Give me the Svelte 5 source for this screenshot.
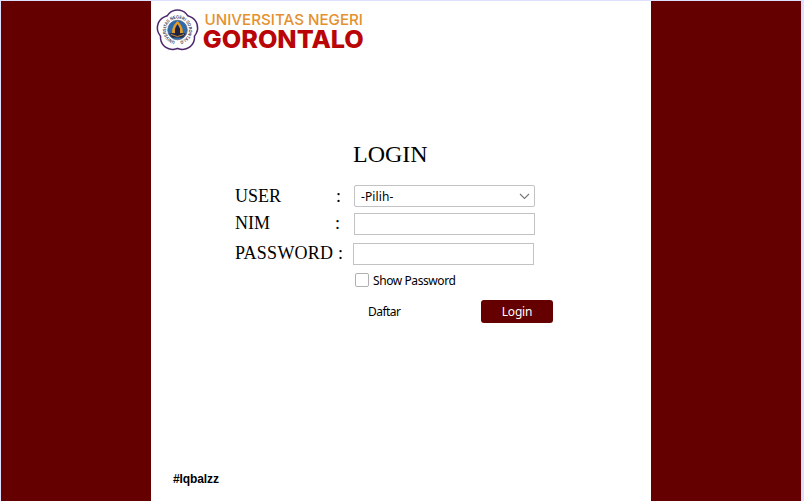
<script>
  let user = $state('-Pilih-');
  let nim = $state('');
  let password = $state('');
  let showPassword = $state(false);
  const petals = [0, 72, 144, 216, 288];
</script>

<div class="window">
  <main class="panel">
    <header>
      <svg class="logo" width="216" height="46" viewBox="0 0 216 46">
        <defs>
          <path id="ring" d="M19 34.1 A11.4 11.4 0 1 1 24 34.1" />
        </defs>
        <g fill="#fff" stroke="#4b286d" stroke-width="2.6">
          {#each petals as angle}
            <circle cx="21.5" cy="14.9" r="11.4" transform="rotate({angle} 21.5 23.5)" />
          {/each}
        </g>
        <g fill="#fff">
          {#each petals as angle}
            <circle cx="21.5" cy="14.9" r="11.2" transform="rotate({angle} 21.5 23.5)" />
          {/each}
        </g>
        <text class="ring-text"><textPath href="#ring" textLength="66" lengthAdjust="spacingAndGlyphs">UNIVERSITAS NEGERI GORONTALO</textPath></text>
        <circle cx="21.5" cy="23" r="9.8" fill="#2c6cab" stroke="#4d5a78" stroke-width="0.7" />
        <path d="M21.5 14 C18 17.5 15.6 21 16.2 26.5 H19 C18.6 22 19.4 19.5 21.5 17.5 C23.6 19.5 24.4 22 24 26.5 H26.8 C27.4 21 25 17.5 21.5 14Z" fill="#e89a22" />
        <path d="M21.5 17 L24 22 L24 28 H19 L19 22Z" fill="#1e2140" />
        <path d="M13.4 26.5 L18 26 L21.5 28 L25 26 L29.6 26.5 L27 30.5 H16Z" fill="#24243c" />
        <path d="M15 27.5 L21.5 29.5 L28 27.5" fill="none" stroke="#d99a3d" stroke-width="0.9" />
        <text class="top-name" x="48.5" y="18.2" textLength="158.5" lengthAdjust="spacingAndGlyphs">UNIVERSITAS NEGERI</text>
        <text class="main-name" x="46.8" y="41" textLength="161" lengthAdjust="spacingAndGlyphs">GORONTALO</text>
      </svg>
    </header>

    <h1>LOGIN</h1>

    <form onsubmit={(e) => e.preventDefault()}>
      <div class="row user">
        <span class="label">USER</span><span class="colon">:</span>
        <button type="button" class="select">
          <span>{user}</span>
          <svg width="11" height="7" viewBox="0 0 11 7"><path d="M1 1 L5.5 5.5 L10 1" fill="none" stroke="#777" stroke-width="1.1" /></svg>
        </button>
      </div>
      <div class="row nim">
        <span class="label">NIM</span><span class="colon">:</span>
        <input bind:value={nim} aria-label="NIM" />
      </div>
      <div class="row password">
        <span class="label">PASSWORD</span><span class="colon">:</span>
        <input type={showPassword ? 'text' : 'password'} bind:value={password} aria-label="PASSWORD" />
      </div>
      <label class="show">
        <input type="checkbox" bind:checked={showPassword} />
        <span>Show Password</span>
      </label>
      <div class="actions">
        <button type="button" class="register">Daftar</button>
        <button type="submit" class="login">Login</button>
      </div>
    </form>

    <footer>#Iqbalzz</footer>
  </main>
</div>

<style>
  * { box-sizing: border-box; }
  .window {
    width: 804px;
    height: 501px;
    border: solid #dfdfff;
    border-width: 1px 3px 0 1px;
    background: #640000;
    overflow: hidden;
  }
  .panel {
    width: 500px;
    height: 500px;
    margin-left: 150px;
    background: #fff;
    display: flex;
    flex-direction: column;
    color: #000;
  }
  header { height: 139px; padding: 6px 0 0 5px; }
  .logo { display: block; }
  .ring-text { font: 700 4.6px "Liberation Sans", Arial, sans-serif; fill: #3a3448; }
  .top-name { font: 500 15.2px Inter, sans-serif; fill: #e4902f; }
  .main-name { font: 800 24.5px Inter, sans-serif; fill: #b90506; }
  h1 {
    margin: 0 0 0 202px;
    height: 45px;
    font: 400 24px/28px "Liberation Serif", "Times New Roman", serif;
  }
  form {
    display: flex;
    flex-direction: column;
    padding-left: 84px;
    font: 12px "Noto Sans", sans-serif;
  }
  .row { display: flex; height: 22px; width: 300px; }
  .nim { margin-top: 6px; }
  .password { margin-top: 8px; width: 299px; }
  .label, .colon { font: 18px/23px "Liberation Serif", "Times New Roman", serif; }
  .label { width: 102px; }
  .user .label { width: 101px; }
  .nim .label { width: 100px; }
  .password .label { width: 103px; letter-spacing: 0.25px; }
  .nim .label, .nim .colon { line-height: 21px; }
  .password .label, .password .colon { line-height: 21px; }
  .row input, .select {
    width: 181px;
    height: 22px;
    margin: 0 0 0 auto;
    padding: 0 7px;
    border: 1px solid #c2c2c2;
    background: #fff;
    border-radius: 0;
    outline: 0;
  }
  .select {
    display: flex;
    align-items: center;
    justify-content: space-between;
    padding: 1px 4px 0 6px;
    border-radius: 2px;
    color: #000;
    font: 12px "Noto Sans", sans-serif;
    letter-spacing: 0.1px;
  }
  .show {
    display: flex;
    align-items: center;
    height: 14px;
    margin: 8px 0 0 120px;
    letter-spacing: -0.42px;
  }
  .show input {
    appearance: none;
    width: 14px;
    height: 14px;
    margin: 0 4px 0 0;
    border: 1px solid #b0b0b0;
    border-radius: 2px;
    background: #fff;
  }
  .actions { display: flex; margin: 13px 0 0 133px; height: 23px; }
  .actions button {
    border: 0;
    padding: 0;
    background: none;
    color: #000;
    font: 12px/23px "Noto Sans", sans-serif;
  }
  .actions .register { width: 113px; text-align: left; letter-spacing: -0.55px; }
  .actions .login {
    width: 72px;
    border-radius: 3px;
    background: #640000;
    color: #fff;
    letter-spacing: -0.2px;
  }
  footer {
    margin: auto 0 15px 22px;
    font: 700 12px/14px "Liberation Sans", Arial, sans-serif;
    letter-spacing: -0.1px;
  }
</style>
